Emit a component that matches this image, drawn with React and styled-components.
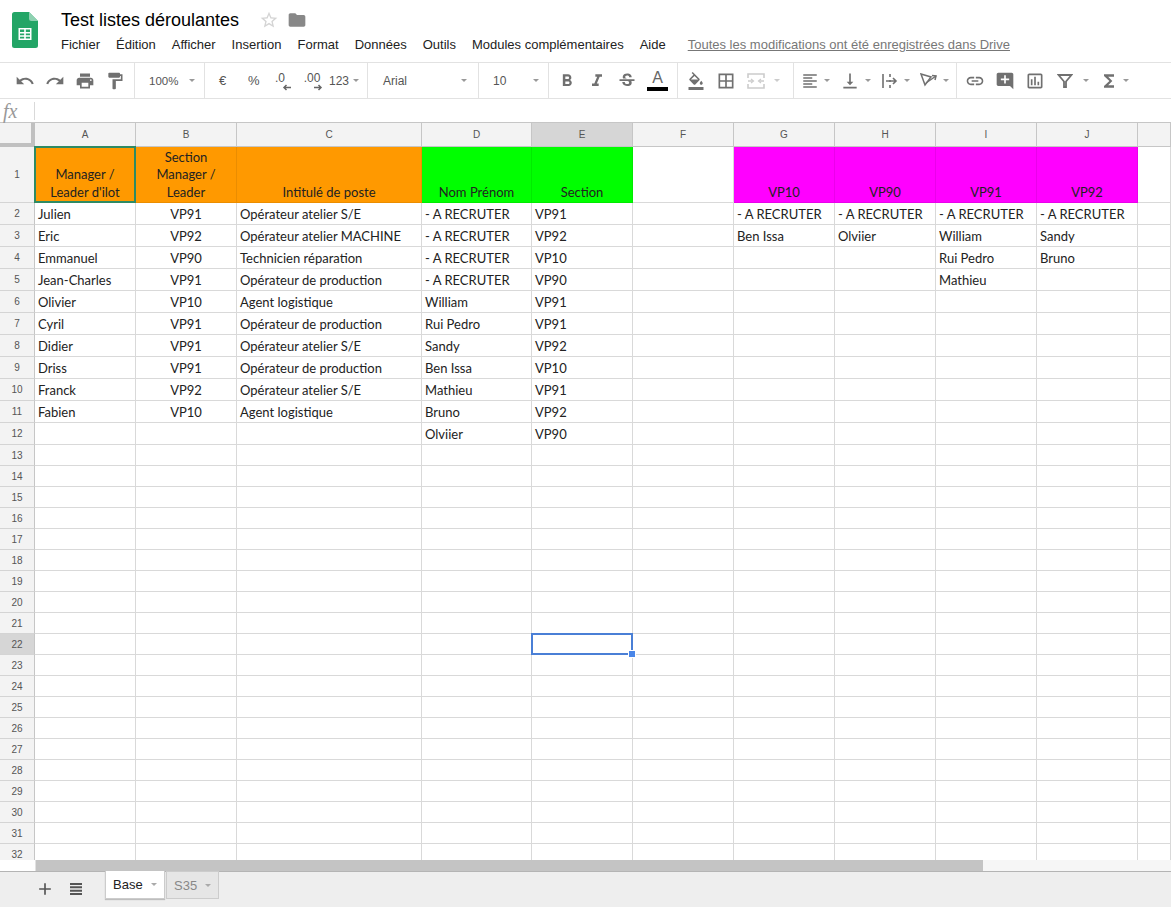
import styled, { createGlobalStyle } from "styled-components";
import {
  MdUndo,
  MdRedo,
  MdPrint,
  MdFormatPaint,
  MdFormatBold,
  MdFormatItalic,
  MdStrikethroughS,
  MdFormatColorFill,
  MdBorderAll,
  MdFormatAlignLeft,
  MdVerticalAlignBottom,
  MdInsertLink,
  MdAddComment,
  MdOutlineAssessment,
  MdFunctions,
  MdStarBorder,
  MdFolder,
  MdAdd,
} from "react-icons/md";

const GlobalStyle = createGlobalStyle`
  html, body {
    margin: 0;
    padding: 0;
    background: #fff;
    font-family: "Liberation Sans", Arial, sans-serif;
  }
  * { box-sizing: border-box; }
`;

const Page = styled.div`
  width: 1171px;
  height: 907px;
  display: flex;
  flex-direction: column;
  overflow: hidden;
`;

const Header = styled.header`
  height: 63px;
  flex: none;
  display: flex;
  padding-left: 12px;
  border-bottom: 1px solid #e2e2e2;
`;

const Logo = styled.svg`
  width: 26px;
  height: 36px;
  margin-top: 12px;
  flex: none;
`;

const HeaderText = styled.div`
  margin-left: 23px;
  display: flex;
  flex-direction: column;
`;

const TitleRow = styled.div`
  display: flex;
  align-items: center;
  height: 24px;
  margin-top: 8px;
  color: #000;
`;

const Title = styled.span`
  font-size: 18px;
  width: 198px;
`;

const TitleIcon = styled.span`
  display: flex;
  width: 28px;
  color: ${(p) => p.$color};
`;

const Menu = styled.nav`
  display: flex;
  align-items: center;
  margin-top: 2px;
  height: 20px;
  font-size: 13px;
  color: #222;
`;

const MenuItem = styled.span`
  margin-right: ${(p) => p.$gap}px;
`;

const SavedNote = styled.span`
  color: #777;
  text-decoration: underline;
  margin-left: 22px;
`;

const Toolbar = styled.div`
  height: 36px;
  flex: none;
  display: flex;
  border-bottom: 1px solid #e2e2e2;
`;

const Group = styled.div`
  width: ${(p) => p.$width}px;
  flex: none;
  display: flex;
  align-items: center;
  padding-left: ${(p) => p.$pad || 0}px;
  border-right: ${(p) => (p.$last ? "none" : "1px solid #e2e2e2")};
`;

const Tool = styled.span`
  width: ${(p) => p.$width || 30}px;
  flex: none;
  display: flex;
  align-items: center;
  justify-content: center;
  color: ${(p) => p.$color || "#707070"};
  font-size: ${(p) => p.$size || 20}px;
`;

const ToolText = styled.span`
  width: ${(p) => p.$width}px;
  flex: none;
  font-size: ${(p) => p.$size || 11}px;
  color: #555;
  padding-left: ${(p) => p.$pad || 0}px;
`;

const Caret = styled.span`
  width: 0;
  height: 0;
  flex: none;
  border-left: 3px solid transparent;
  border-right: 3px solid transparent;
  border-top: 3px solid ${(p) => p.$color || "#999"};
  margin-left: ${(p) => p.$left || 0}px;
  margin-right: ${(p) => p.$right || 0}px;
`;

const Decimal = styled.span`
  width: ${(p) => p.$width}px;
  flex: none;
  display: flex;
  flex-direction: column;
  align-items: center;
  padding-top: 3px;
  padding-right: ${(p) => p.$shift || 0}px;
  font-size: 12px;
  line-height: 11px;
  color: #555;
`;

const DecimalArrow = styled.svg`
  width: 9px;
  height: 7px;
  margin-left: 12px;
  display: block;
`;

const TextColor = styled.span`
  width: 30px;
  flex: none;
  display: flex;
  flex-direction: column;
  align-items: center;
  padding-left: 1px;
  font-size: 16px;
  line-height: 15px;
  color: #666;
  &::after {
    content: "";
    width: 21px;
    height: 4px;
    margin-top: 2px;
    background: #000;
  }
`;

const FormulaBar = styled.div`
  height: 24px;
  flex: none;
  display: flex;
  align-items: center;
  border-bottom: 1px solid #c6c6c6;
`;

const Fx = styled.span`
  width: 35px;
  height: 18px;
  padding-left: 3px;
  font-family: "Liberation Serif", serif;
  font-style: italic;
  font-size: 20px;
  line-height: 18px;
  color: #999;
  border-right: 1px solid #d9d9d9;
`;

const Sheet = styled.div`
  flex: 1;
  min-height: 0;
  overflow: hidden;
  display: grid;
  grid-template-columns: 35px 101px 101px 185px 110px 101px 101px 101px 101px 101px 101px 33px;
  grid-template-rows: 24px 56px repeat(11, 22px) repeat(20, 21px);
`;

const Corner = styled.div`
  background: #f3f3f3;
  border-right: 4px solid #c0c0c0;
  border-bottom: 4px solid #c0c0c0;
`;

const ColHead = styled.div`
  display: flex;
  align-items: center;
  justify-content: center;
  font-size: 10px;
  color: #555;
  background: ${(p) => (p.$active ? "#d6d6d6" : "#f3f3f3")};
  border-right: 1px solid #c6c6c6;
  border-bottom: 1px solid #c6c6c6;
`;

const RowHead = styled.div`
  display: flex;
  align-items: center;
  justify-content: center;
  font-size: 10px;
  color: #555;
  background: ${(p) => (p.$active ? "#d6d6d6" : "#f3f3f3")};
  border-right: 1px solid #c6c6c6;
  border-bottom: 1px solid #d4d4d4;
`;

const Cell = styled.div`
  position: relative;
  display: flex;
  align-items: flex-end;
  justify-content: ${(p) => (p.$center ? "center" : "flex-start")};
  text-align: ${(p) => (p.$center ? "center" : "left")};
  padding: 0 3px 1px;
  font-family: Lato, "Open Sans", sans-serif;
  font-size: 13px;
  line-height: 17.5px;
  color: #222;
  white-space: ${(p) => (p.$wrap ? "normal" : "nowrap")};
  background: ${(p) => p.$bg || "#fff"};
  border-right: 1px solid ${(p) => (p.$bg ? "rgba(0,0,0,0.08)" : "#d9d9d9")};
  border-bottom: 1px solid ${(p) => (p.$bg ? "rgba(0,0,0,0.08)" : "#d9d9d9")};
`;

const ActiveFrame = styled.div`
  position: absolute;
  inset: -1px;
  z-index: 1;
  border: 2px solid #2e8b64;
  pointer-events: none;
`;

const SelectFrame = styled.div`
  position: absolute;
  inset: -1px;
  z-index: 1;
  border: 2px solid #4a7fd6;
  pointer-events: none;
  &::after {
    content: "";
    position: absolute;
    right: -5px;
    bottom: -5px;
    width: 6px;
    height: 6px;
    background: #4a86e8;
    border: 1px solid #fff;
    box-sizing: content-box;
  }
`;

const ScrollRow = styled.div`
  height: 12px;
  flex: none;
  display: flex;
  border-bottom: 1px solid #b4b4b4;
`;

const ScrollCorner = styled.div`
  width: 36px;
  flex: none;
  border-right: 1px solid #e2e2e2;
`;

const ScrollTrack = styled.div`
  flex: 1;
  background: #f6f6f6;
`;

const ScrollThumb = styled.div`
  height: 100%;
  background: #c4c4c4;
`;

const TabBar = styled.div`
  height: 35px;
  flex: none;
  display: flex;
  align-items: flex-start;
  background: #eeeeee;
  padding-left: 35px;
`;

const BarIcon = styled.span`
  width: ${(p) => p.$width}px;
  height: 34px;
  flex: none;
  display: flex;
  align-items: center;
  color: #555;
  font-size: 20px;
`;

const Tab = styled.div`
  width: ${(p) => p.$width}px;
  height: 28px;
  flex: none;
  display: flex;
  align-items: center;
  padding-left: 7px;
  margin-top: -1px;
  font-size: 13px;
  color: ${(p) => (p.$active ? "#222" : "#888")};
  background: ${(p) => (p.$active ? "#fff" : "#e6e6e6")};
  border: 1px solid #ccc;
  border-top: ${(p) => (p.$active ? "none" : "1px solid #ccc")};
  box-shadow: ${(p) => (p.$active ? "0 1px 1px rgba(0,0,0,0.2)" : "none")};
  margin-right: 1px;
`;

const columns = ["A", "B", "C", "D", "E", "F", "G", "H", "I", "J", ""];
const centered = [false, true, false, false, false, false, false, false, false, false, false];

const rows = [
  ["Julien", "VP91", "Opérateur atelier S/E", "- A RECRUTER", "VP91", "", "- A RECRUTER", "- A RECRUTER", "- A RECRUTER", "- A RECRUTER"],
  ["Eric", "VP92", "Opérateur atelier MACHINE", "- A RECRUTER", "VP92", "", "Ben Issa", "Olviier", "William", "Sandy"],
  ["Emmanuel", "VP90", "Technicien réparation", "- A RECRUTER", "VP10", "", "", "", "Rui Pedro", "Bruno"],
  ["Jean-Charles", "VP91", "Opérateur de production", "- A RECRUTER", "VP90", "", "", "", "Mathieu", ""],
  ["Olivier", "VP10", "Agent logistique", "William", "VP91"],
  ["Cyril", "VP91", "Opérateur de production", "Rui Pedro", "VP91"],
  ["Didier", "VP91", "Opérateur atelier S/E", "Sandy", "VP92"],
  ["Driss", "VP91", "Opérateur de production", "Ben Issa", "VP10"],
  ["Franck", "VP92", "Opérateur atelier S/E", "Mathieu", "VP91"],
  ["Fabien", "VP10", "Agent logistique", "Bruno", "VP92"],
  ["", "", "", "Olviier", "VP90"],
];

const ORANGE = "#ff9900";
const GREEN = "#00ff00";
const MAGENTA = "#ff00ff";

const headerCells = [
  { text: "Manager / Leader d'ilot", bg: ORANGE },
  { text: "Section Manager / Leader", bg: ORANGE },
  { text: "Intitulé de poste", bg: ORANGE },
  { text: "Nom Prénom", bg: GREEN },
  { text: "Section", bg: GREEN },
  { text: "" },
  { text: "VP10", bg: MAGENTA },
  { text: "VP90", bg: MAGENTA },
  { text: "VP91", bg: MAGENTA },
  { text: "VP92", bg: MAGENTA },
  { text: "" },
];

const SheetsLogo = () => (
  <Logo viewBox="0 0 26 36">
    <path d="M2.5 0H17l9 9v24.5a2.5 2.5 0 0 1-2.5 2.5h-21A2.5 2.5 0 0 1 0 33.5v-31A2.5 2.5 0 0 1 2.5 0z" fill="#23a566" />
    <path d="M17 0l9 9h-6.5A2.5 2.5 0 0 1 17 6.500z" fill="#8ed1b1" />
    <path d="M6.500 16h13v12h-13z M8 17.500v2.500h4.200v-2.500z M13.800 17.500v2.500H18v-2.500z M8 21.500v1.800h4.200v-1.800z M13.800 21.500v1.800H18v-1.800z M8 24.800v1.700h4.200v-1.700z M13.800 24.800v1.700H18v-1.700z" fill="#fff" fillRule="evenodd" />
  </Logo>
);

const MergeIcon = () => (
  <svg width="18" height="18" viewBox="0 0 18 18" fill="none" stroke="#ccc" strokeWidth="1.600">
    <path d="M1 6V2h16v4M1 12v4h16v-4M1 9h5M17 9h-5" />
    <path d="M4 7l2.500 2L4 11M14 7l-2.500 2L14 11" strokeWidth="1.200" />
  </svg>
);

const WrapIcon = () => (
  <svg width="18" height="18" viewBox="0 0 18 18" fill="none" stroke="#707070" strokeWidth="1.600">
    <path d="M2 2v14M9 2v3M9 8v2M9 13v3" />
    <path d="M5 9h10M12 6l3 3-3 3" />
  </svg>
);

const RotateIcon = () => (
  <svg width="18" height="18" viewBox="0 0 18 18" fill="none" stroke="#707070" strokeWidth="1.500">
    <path d="M1 2l10 3-6 8z" />
    <path d="M6 11l10-7" />
    <path d="M12 3.500l4 .5-1 4" />
  </svg>
);

const FilterIcon = () => (
  <svg width="16" height="16" viewBox="0 0 16 16" fill="none" stroke="#707070" strokeWidth="1.800">
    <path d="M1.500 2h13L9 8.500V14H7V8.500z" />
  </svg>
);

const SheetListIcon = () => (
  <svg width="12" height="12" viewBox="0 0 12 12" fill="#555">
    <path d="M0 0h12v2H0zM0 3.300h12v2H0zM0 6.700h12v2H0zM0 10h12v2H0z" />
  </svg>
);

const App = () => (
  <Page>
    <GlobalStyle />
    <Header>
      <SheetsLogo />
      <HeaderText>
        <TitleRow>
          <Title>Test listes déroulantes</Title>
          <TitleIcon $color="#d4d4d4">
            <MdStarBorder size={20} />
          </TitleIcon>
          <TitleIcon $color="#888">
            <MdFolder size={20} />
          </TitleIcon>
        </TitleRow>
        <Menu>
          <MenuItem $gap={16}>Fichier</MenuItem>
          <MenuItem $gap={16}>Édition</MenuItem>
          <MenuItem $gap={16}>Afficher</MenuItem>
          <MenuItem $gap={16}>Insertion</MenuItem>
          <MenuItem $gap={16}>Format</MenuItem>
          <MenuItem $gap={16}>Données</MenuItem>
          <MenuItem $gap={16}>Outils</MenuItem>
          <MenuItem $gap={16}>Modules complémentaires</MenuItem>
          <MenuItem $gap={0}>Aide</MenuItem>
          <SavedNote>Toutes les modifications ont été enregistrées dans Drive</SavedNote>
        </Menu>
      </HeaderText>
    </Header>

    <Toolbar>
      <Group $width={135} $pad={10}>
        <Tool><MdUndo /></Tool>
        <Tool><MdRedo /></Tool>
        <Tool><MdPrint /></Tool>
        <Tool><MdFormatPaint /></Tool>
      </Group>
      <Group $width={70} $pad={14}>
        <ToolText $width={40} $size={11.5}>100%</ToolText>
        <Caret />
      </Group>
      <Group $width={163} $pad={3}>
        <ToolText $width={30} $size={13} $pad={11}>€</ToolText>
        <ToolText $width={30} $size={13} $pad={10}>%</ToolText>
        <Decimal $width={30} $shift={6}>
          .0
          <DecimalArrow viewBox="0 0 9 7"><path d="M9 3.500H2M4.500 1L2 3.500 4.500 6" stroke="#666" strokeWidth="1.500" fill="none" /></DecimalArrow>
        </Decimal>
        <Decimal $width={28}>
          .00
          <DecimalArrow viewBox="0 0 9 7"><path d="M0 3.500h7M4.500 1L7 3.500 4.500 6" stroke="#666" strokeWidth="1.500" fill="none" /></DecimalArrow>
        </Decimal>
        <ToolText $width={24} $size={12} $pad={3}>123</ToolText>
        <Caret $left={3} />
      </Group>
      <Group $width={111} $pad={15}>
        <ToolText $width={75} $size={12}>Arial</ToolText>
        <Caret $left={3} />
      </Group>
      <Group $width={70} $pad={14}>
        <ToolText $width={40} $size={12}>10</ToolText>
        <Caret />
      </Group>
      <Group $width={129} $pad={3}>
        <Tool><MdFormatBold /></Tool>
        <Tool><MdFormatItalic /></Tool>
        <Tool><MdStrikethroughS /></Tool>
        <TextColor>A</TextColor>
      </Group>
      <Group $width={116} $pad={3}>
        <Tool $size={18}><MdFormatColorFill /></Tool>
        <Tool><MdBorderAll /></Tool>
        <Tool><MergeIcon /></Tool>
        <Caret $left={3} $color="#ccc" />
      </Group>
      <Group $width={163} $pad={7}>
        <Tool $width={18}><MdFormatAlignLeft /></Tool>
        <Caret $left={5} $right={10} />
        <Tool $width={20}><MdVerticalAlignBottom /></Tool>
        <Caret $left={5} $right={10} />
        <Tool $width={18}><WrapIcon /></Tool>
        <Caret $left={5} $right={9} />
        <Tool $width={20}><RotateIcon /></Tool>
        <Caret $left={4} />
      </Group>
      <Group $width={214} $pad={3} $last>
        <Tool><MdInsertLink /></Tool>
        <Tool><MdAddComment /></Tool>
        <Tool><MdOutlineAssessment /></Tool>
        <Tool><FilterIcon /></Tool>
        <Caret $left={3} $right={9} />
        <Tool $width={22}><MdFunctions /></Tool>
        <Caret $left={3} />
      </Group>
    </Toolbar>

    <FormulaBar>
      <Fx>fx</Fx>
    </FormulaBar>

    <Sheet>
      <Corner />
      {columns.map((c, i) => (
        <ColHead key={i} $active={c === "E"}>{c}</ColHead>
      ))}

      <RowHead>1</RowHead>
      {headerCells.map((c, i) => (
        <Cell key={i} $center $wrap $bg={c.bg}>
          {c.text}
          {i === 0 && <ActiveFrame />}
        </Cell>
      ))}

      {Array.from({ length: 31 }, (_, r) => {
        const rowNumber = r + 2;
        const data = rows[r] || [];
        return [
          <RowHead key={`h${r}`} $active={rowNumber === 22}>{rowNumber}</RowHead>,
          ...columns.map((_, c) => (
            <Cell key={`${r}-${c}`} $center={centered[c]}>
              {data[c] || ""}
              {rowNumber === 22 && c === 4 && <SelectFrame />}
            </Cell>
          )),
        ];
      })}
    </Sheet>

    <ScrollRow>
      <ScrollCorner />
      <ScrollTrack>
        <ScrollThumb style={{ width: 947 }} />
      </ScrollTrack>
    </ScrollRow>

    <TabBar>
      <BarIcon $width={35}><MdAdd /></BarIcon>
      <BarIcon $width={35}><SheetListIcon /></BarIcon>
      <Tab $active $width={60}>
        Base
        <Caret $left={8} $color="#aaa" />
      </Tab>
      <Tab $width={53}>
        S35
        <Caret $left={8} $color="#aaa" />
      </Tab>
    </TabBar>
  </Page>
);

export default App;
